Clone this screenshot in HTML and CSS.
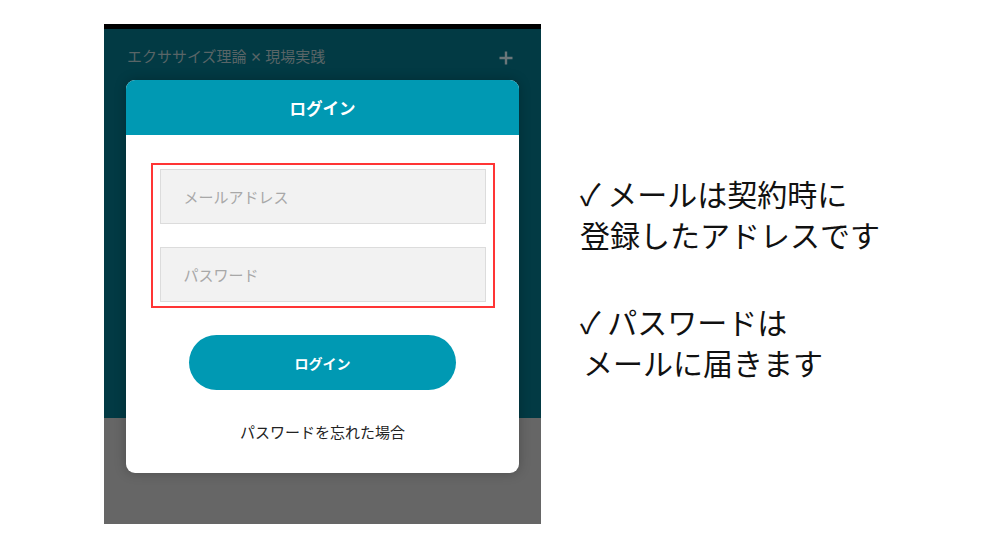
FILE: index.html
```html
<!DOCTYPE html>
<html lang="ja">
<head>
    <meta charset="UTF-8">
    <meta name="viewport" content="width=device-width, initial-scale=1.0">
    <title>ログイン</title>
    <link rel="stylesheet" href="styles.css">
</head>
<body>
    <div class="page">
        <div class="phone">
            <div class="status-bar"></div>
            <div class="screen-top">
                <span class="course-title">エクササイズ理論 <span class="times">×</span> 現場実践</span>
                <svg class="plus" width="14" height="14" viewBox="0 0 14 14">
                    <path d="M7 0.5V13.5M0.5 7H13.5" stroke="#6b7679" stroke-width="2.4"/>
                </svg>
            </div>
            <div class="screen-bottom"></div>

            <div class="modal">
                <div class="modal-header">ログイン</div>
                <div class="modal-body">
                    <div class="highlight">
                        <input type="text" class="field" placeholder="メールアドレス">
                        <input type="password" class="field" placeholder="パスワード">
                    </div>
                    <button class="login-btn">ログイン</button>
                    <a class="forgot" href="#">パスワードを忘れた場合</a>
                </div>
            </div>
        </div>

        <div class="notes">
            <p>✓ メールは契約時に<br>登録したアドレスです</p>
            <p>✓ パスワードは<br><span class="indent">メールに届きます</span></p>
        </div>
    </div>
</body>
</html>
```

FILE: styles.css
```css
body {
    margin: 0;
    background: #ffffff;
    font-family: "Noto Sans CJK JP", "Noto Sans", sans-serif;
}
.page {
    display: flex;
    align-items: flex-start;
    padding: 24px 0 0 104px;
}
.phone {
    position: relative;
    width: 437px;
    height: 500px;
    display: flex;
    flex-direction: column;
}
.status-bar {
    height: 5px;
    background: #000000;
}
.screen-top {
    height: 389px;
    background: #023a44;
    display: flex;
    justify-content: space-between;
    align-items: flex-start;
    padding: 17px 28px 0 23px;
    box-sizing: border-box;
}
.course-title {
    color: #596567;
    font-size: 15px;
    line-height: 20px;
}
.times {
    font-size: 12px;
    font-weight: bold;
}
.plus {
    margin-top: 5px;
}
.screen-bottom {
    flex: 1;
    background: #666666;
}
.modal {
    position: absolute;
    left: 22px;
    top: 56px;
    width: 393px;
    background: #ffffff;
    border-radius: 9px;
    overflow: hidden;
    box-shadow: 0 0 12px rgba(0, 0, 0, 0.25);
}
.modal-header {
    height: 55px;
    background: #0099b3;
    color: #ffffff;
    font-size: 16.5px;
    font-weight: bold;
    display: flex;
    align-items: center;
    justify-content: center;
}
.modal-body {
    padding: 28px 24px 30px;
    display: flex;
    flex-direction: column;
    align-items: center;
}
.highlight {
    width: 344px;
    box-sizing: border-box;
    border: 2.5px solid #ff3535;
    padding: 4px 7px 4px;
    display: flex;
    flex-direction: column;
    gap: 23px;
}
.field {
    height: 55px;
    box-sizing: border-box;
    border: 1px solid #dcdcdc;
    background: #f2f2f2;
    padding: 0 23px;
    font-family: inherit;
    font-size: 15px;
    outline: none;
}
.field::placeholder {
    color: #a8a8a8;
}
.login-btn {
    margin-top: 27px;
    width: 267px;
    height: 55px;
    border: none;
    border-radius: 28px;
    background: #0099b3;
    color: #ffffff;
    font-family: inherit;
    font-size: 14px;
    font-weight: bold;
}
.forgot {
    margin-top: 31px;
    color: #222222;
    font-size: 15px;
    line-height: 22px;
    text-decoration: none;
}
.notes {
    margin-left: 39px;
    padding-top: 149px;
}
.notes p {
    margin: 0 0 46px;
    font-size: 30px;
    line-height: 41px;
    color: #111111;
}
.indent {
    padding-left: 3px;
}
```
